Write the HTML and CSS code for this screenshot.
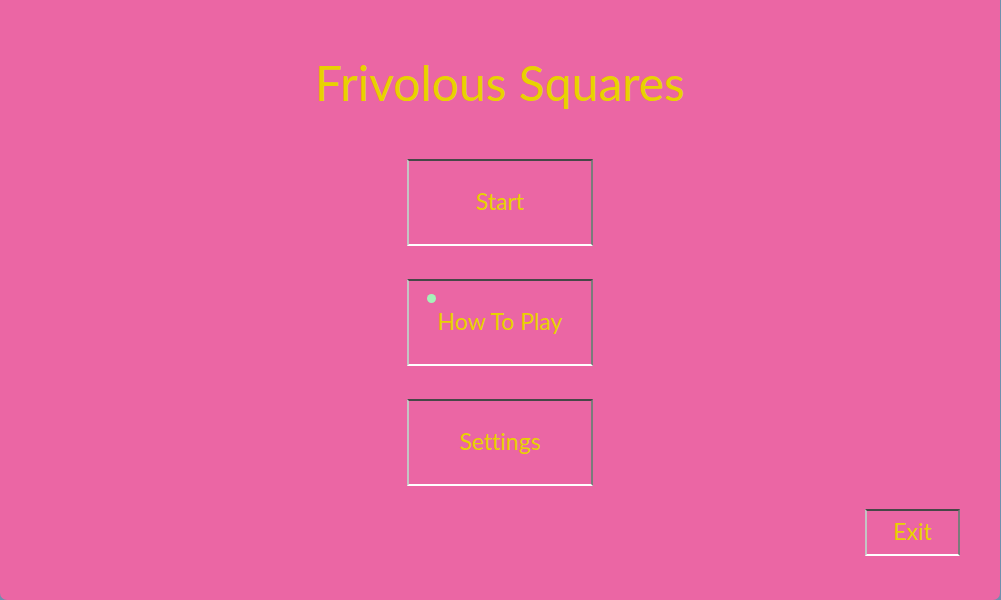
FILE: index.html
```html
<!DOCTYPE html>
<html lang="en">
<head>
<meta charset="utf-8">
<title>Frivolous Squares</title>
<link rel="stylesheet" href="styles.css">
</head>
<body>
<div class="window">
  <h1 class="title">Frivolous Squares</h1>
  <nav class="menu">
    <button class="btn">Start</button>
    <button class="btn btn-focus"><span class="dot"></span>How To Play</button>
    <button class="btn">Settings</button>
  </nav>
  <div class="footer">
    <button class="btn exit">Exit</button>
  </div>
</div>
</body>
</html>
```
FILE: styles.css
```css
html, body {
  margin: 0;
  padding: 0;
  width: 1001px;
  height: 600px;
  overflow: hidden;
  background: #6f8fae;
}
body {
  font-family: "Lato", "Noto Sans", sans-serif;
  font-variant-ligatures: none;
}
.window {
  width: 1000px;
  height: 600px;
  background: #eb66a4;
  border-radius: 0 0 7px 7px;
  display: flex;
  flex-direction: column;
  align-items: center;
  box-sizing: border-box;
  padding-top: 54px;
  position: relative;
}
.title {
  margin: 0;
  font-weight: 400;
  font-size: 48px;
  line-height: 58px;
  color: #e8d200;
}
.menu {
  margin-top: 47px;
  display: flex;
  flex-direction: column;
  gap: 33px;
}
.btn {
  position: relative;
  width: 186px;
  height: 87px;
  box-sizing: border-box;
  background: transparent;
  border-style: solid;
  border-width: 2px;
  border-top-color: #474747;
  border-left-color: #c4c4c4;
  border-right-color: #7b7b7b;
  border-bottom-color: #ffffff;
  font-family: "Lato", "Noto Sans", sans-serif;
  font-variant-ligatures: none;
  font-size: 23px;
  color: #e8d200;
  padding: 0 0 4px 0;
}
.dot {
  position: absolute;
  left: 18px;
  top: 13px;
  width: 9px;
  height: 9px;
  border-radius: 50%;
  background: #a6f2b9;
}
.footer {
  align-self: stretch;
  display: flex;
  justify-content: flex-end;
  margin-top: 23px;
  padding-right: 40px;
}
.exit {
  width: 95px;
  height: 47px;
  font-size: 23px;
}
```
